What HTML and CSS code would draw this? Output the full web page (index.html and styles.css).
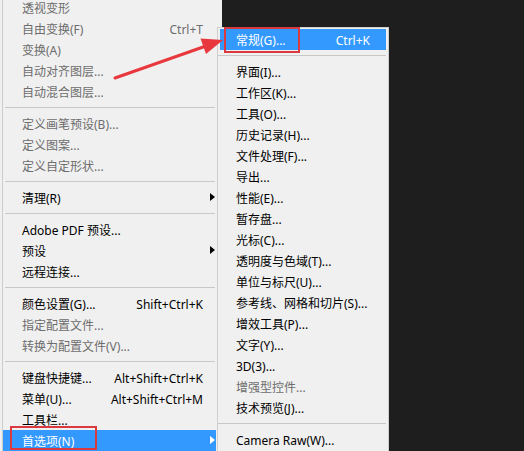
FILE: index.html
```html
<!DOCTYPE html>
<html lang="zh-CN">
<head>
<meta charset="utf-8">
<title>首选项菜单</title>
<link rel="stylesheet" href="styles.css">
</head>
<body>
<div class="screen">
  <div class="menu main">
    <div class="item off"><span class="label">透视变形</span></div>
    <div class="item off"><span class="label">自由变换(F)</span><span class="key">Ctrl+T</span></div>
    <div class="item off"><span class="label">变换(A)</span></div>
    <div class="item off"><span class="label">自动对齐图层...</span></div>
    <div class="item off"><span class="label">自动混合图层...</span></div>
    <div class="sep"></div>
    <div class="item off"><span class="label">定义画笔预设(B)...</span></div>
    <div class="item off"><span class="label">定义图案...</span></div>
    <div class="item off"><span class="label">定义自定形状...</span></div>
    <div class="sep"></div>
    <div class="item sub"><span class="label">清理(R)</span></div>
    <div class="sep"></div>
    <div class="item"><span class="label">Adobe PDF 预设...</span></div>
    <div class="item sub"><span class="label">预设</span></div>
    <div class="item"><span class="label">远程连接...</span></div>
    <div class="sep"></div>
    <div class="item"><span class="label">颜色设置(G)...</span><span class="key">Shift+Ctrl+K</span></div>
    <div class="item off"><span class="label">指定配置文件...</span></div>
    <div class="item off"><span class="label">转换为配置文件(V)...</span></div>
    <div class="sep"></div>
    <div class="item"><span class="label">键盘快捷键...</span><span class="key">Alt+Shift+Ctrl+K</span></div>
    <div class="item"><span class="label">菜单(U)...</span><span class="key">Alt+Shift+Ctrl+M</span></div>
    <div class="item"><span class="label">工具栏...</span></div>
    <div class="item sub active"><span class="label">首选项(N)</span></div>
  </div>

  <div class="menu submenu">
    <div class="item active"><span class="label">常规(G)...</span><span class="key">Ctrl+K</span></div>
    <div class="sep"></div>
    <div class="item"><span class="label">界面(I)...</span></div>
    <div class="item"><span class="label">工作区(K)...</span></div>
    <div class="item"><span class="label">工具(O)...</span></div>
    <div class="item"><span class="label">历史记录(H)...</span></div>
    <div class="item"><span class="label">文件处理(F)...</span></div>
    <div class="item"><span class="label">导出...</span></div>
    <div class="item"><span class="label">性能(E)...</span></div>
    <div class="item"><span class="label">暂存盘...</span></div>
    <div class="item"><span class="label">光标(C)...</span></div>
    <div class="item"><span class="label">透明度与色域(T)...</span></div>
    <div class="item"><span class="label">单位与标尺(U)...</span></div>
    <div class="item"><span class="label">参考线、网格和切片(S)...</span></div>
    <div class="item"><span class="label">增效工具(P)...</span></div>
    <div class="item"><span class="label">文字(Y)...</span></div>
    <div class="item"><span class="label">3D(3)...</span></div>
    <div class="item off"><span class="label">增强型控件...</span></div>
    <div class="item"><span class="label">技术预览(J)...</span></div>
    <div class="sep"></div>
    <div class="item"><span class="label">Camera Raw(W)...</span></div>
  </div>

  <div class="mark mark-general"></div>
  <div class="mark mark-prefs"></div>
  <svg class="arrow" width="524" height="451" viewBox="0 0 524 451">
    <line x1="115" y1="78" x2="206" y2="46" stroke="#e8383d" stroke-width="3" stroke-linecap="round"/>
    <polygon points="223,40 200.5,38.5 206,54" fill="#e8383d"/>
  </svg>
</div>
</body>
</html>
```

FILE: styles.css
```css
html, body {
  margin: 0;
  padding: 0;
}
body {
  background: #1e1e1e;
  width: 524px;
  height: 451px;
  overflow: hidden;
  font-family: "Noto Sans", "Noto Sans CJK SC", sans-serif;
  font-size: 12px;
  color: #000;
}
.screen {
  position: relative;
  display: flex;
  align-items: flex-start;
  width: 524px;
  height: 451px;
}
.menu {
  background: #f0f0f0;
  display: flex;
  flex-direction: column;
}
.main {
  width: 222px;
  margin-top: -3px;
  box-shadow: inset 2px 0 0 #f0f0f0, inset 3px 0 0 #cdcdcd;
}
.item {
  position: relative;
  display: flex;
  align-items: flex-start;
  justify-content: space-between;
  box-sizing: border-box;
  height: 21px;
  padding-top: 2px;
  line-height: 19px;
  white-space: nowrap;
}
.main .item {
  margin: 0 6px 0 3px;
  padding-left: 19px;
  padding-right: 13px;
}
.item.off {
  color: #6d6d6d;
}
.item.active {
  background: #3399ff;
  color: #fff;
}
.item.sub::after {
  content: "";
  position: absolute;
  right: 1px;
  top: 6px;
  border-left: 5px solid #000;
  border-top: 4.5px solid transparent;
  border-bottom: 4.5px solid transparent;
}
.item.sub.active::after {
  border-left-color: #fff;
}
.sep {
  height: 11px;
  display: flex;
  align-items: center;
}
.sep::before {
  content: "";
  flex: 1;
  height: 1px;
  background: #c8c8c8;
}
.main .sep {
  margin: 0 7px 0 5px;
}
.submenu {
  position: absolute;
  left: 217px;
  top: 27px;
  width: 166px;
  height: 440px;
  border: 1px solid #cfcfcf;
  padding: 1px 2px 0 2px;
  box-sizing: content-box;
}
.submenu .item {
  padding-left: 16px;
  padding-right: 16px;
}
.submenu .sep {
  margin: 0 0 0 -2px;
}
.mark {
  position: absolute;
  border: 2.5px solid #d9393f;
  box-sizing: border-box;
}
.mark-general {
  left: 224px;
  top: 27px;
  width: 76px;
  height: 26px;
}
.mark-prefs {
  left: 10px;
  top: 426px;
  width: 87px;
  height: 24px;
}
.arrow {
  position: absolute;
  left: 0;
  top: 0;
  pointer-events: none;
}
```
